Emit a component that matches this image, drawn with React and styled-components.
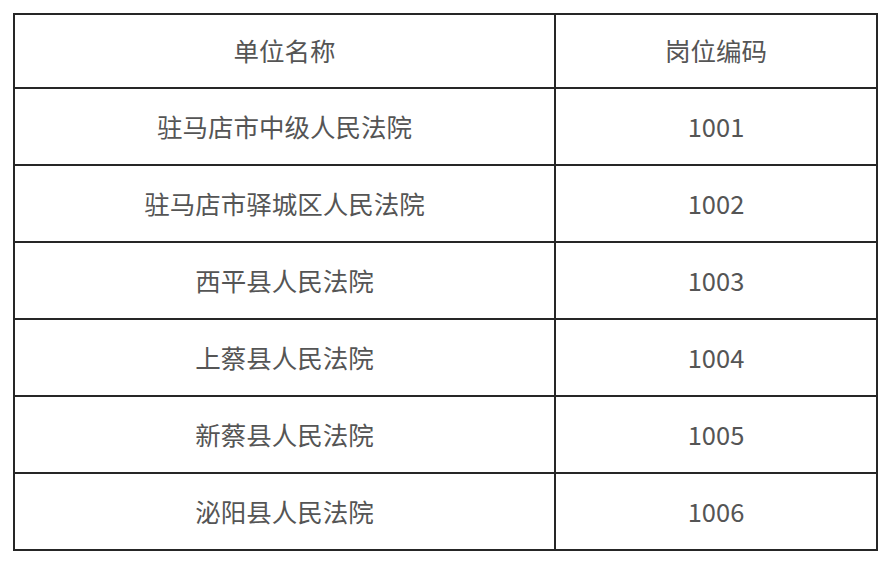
import React from 'react'
import styled, { createGlobalStyle } from 'styled-components'

const Global = createGlobalStyle`
    body {
        margin: 0;
        background: #ffffff;
        font-family: "Noto Sans CJK SC", "Noto Sans", sans-serif;
    }
`

const Page = styled.div`
    padding: 13px 0 0 13px;
`

const Table = styled.table`
    border-collapse: collapse;
    width: 863px;
    table-layout: fixed;
`

const Col = styled.col`
    width: ${p => p.$w}px;
`

const Cell = styled.td`
    border: 2px solid #262626;
    height: 73px;
    padding: 0 0 2px;
    text-align: center;
    vertical-align: middle;
    color: #555555;
    font-size: 25.5px;
    font-weight: 400;
    line-height: 1;
`

const HeadCell = styled(Cell).attrs({ as: 'th' })`
    height: 70px;
`

const rows = [
    ['驻马店市中级人民法院', '1001'],
    ['驻马店市驿城区人民法院', '1002'],
    ['西平县人民法院', '1003'],
    ['上蔡县人民法院', '1004'],
    ['新蔡县人民法院', '1005'],
    ['泌阳县人民法院', '1006'],
]

export default function App() {
    return (
        <Page>
            <Global />
            <Table>
                <colgroup>
                    <Col $w={541} />
                    <Col $w={322} />
                </colgroup>
                <thead>
                    <tr>
                        <HeadCell>单位名称</HeadCell>
                        <HeadCell>岗位编码</HeadCell>
                    </tr>
                </thead>
                <tbody>
                    {rows.map(([name, code]) => (
                        <tr key={code}>
                            <Cell>{name}</Cell>
                            <Cell>{code}</Cell>
                        </tr>
                    ))}
                </tbody>
            </Table>
        </Page>
    )
}
